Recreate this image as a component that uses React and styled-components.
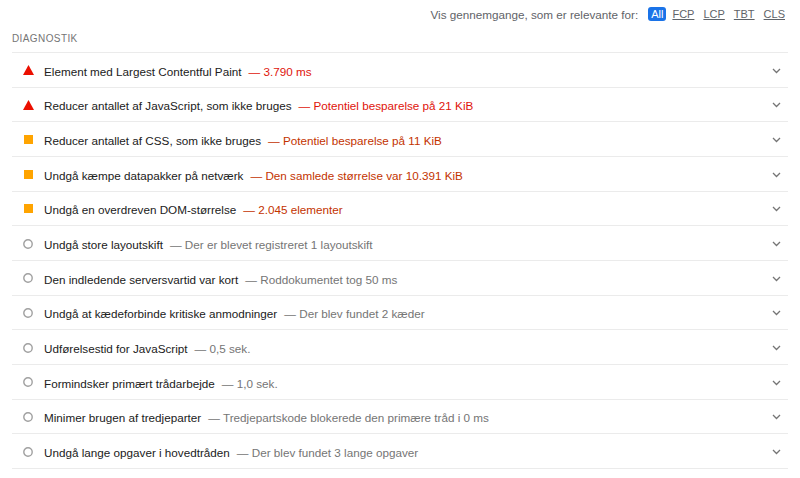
import React from "react";
import styled, { createGlobalStyle } from "styled-components";

const GlobalStyle = createGlobalStyle`
  html, body {
    margin: 0;
    padding: 0;
    background: #ffffff;
  }
  body {
    font-family: "Liberation Sans", Arial, sans-serif;
    color: #212121;
  }
`;

const Page = styled.div`
  width: 800px;
  padding: 0 12px;
  box-sizing: border-box;
`;

const FilterBar = styled.div`
  height: 28px;
  display: flex;
  align-items: center;
  justify-content: flex-end;
  padding-right: 3px;
  font-size: 11.7px;
  color: #5f6368;
`;

const FilterLabel = styled.span`
  margin-right: 10px;
`;

const FilterChip = styled.span`
  margin-left: ${(p) => (p.$first ? "0" : p.$afterActive ? "6px" : "9px")};
  padding: ${(p) => (p.$active ? "0 3px" : "0")};
  font-size: 11px;
  line-height: 14px;
  border-radius: 3px;
  background: ${(p) => (p.$active ? "#1a73e8" : "transparent")};
  color: ${(p) => (p.$active ? "#ffffff" : "#5f6368")};
  text-decoration: ${(p) => (p.$active ? "none" : "underline")};
`;

const SectionTitle = styled.div`
  height: 25px;
  display: flex;
  align-items: center;
  padding-bottom: 3px;
  box-sizing: border-box;
  font-size: 10px;
  letter-spacing: 0.4px;
  color: #757575;
  border-bottom: 1px solid #ebebeb;
`;

const List = styled.div`
  display: flex;
  flex-direction: column;
`;

const Row = styled.div`
  height: 34.67px;
  box-sizing: border-box;
  display: flex;
  align-items: center;
  padding-top: 3px;
  border-bottom: 1px solid #ebebeb;
  font-size: 11.7px;
`;

const IconBox = styled.span`
  width: 32px;
  display: flex;
  justify-content: center;
  align-items: center;
  flex-shrink: 0;
  margin-top: -2px;
`;

const Title = styled.span`
  color: #212121;
  white-space: nowrap;
`;

const colors = {
  fail: "#e0140a",
  average: "#c33300",
  info: "#757575",
};

const Display = styled.span`
  margin-left: 7px;
  color: ${(p) => colors[p.$status]};
  white-space: nowrap;
`;

const Chevron = styled.span`
  margin-left: auto;
  width: 20px;
  display: flex;
  justify-content: center;
  margin-right: 2px;
  margin-top: -1px;
`;

const StatusIcon = ({ status }) => {
  if (status === "fail")
    return (
      <svg width="11" height="10" viewBox="0 0 11 10">
        <polygon points="5.5,0 11,10 0,10" fill="#eb0f00" />
      </svg>
    );
  if (status === "average")
    return (
      <svg width="9" height="9" viewBox="0 0 9 9">
        <rect width="9" height="9" fill="#ffa400" />
      </svg>
    );
  return (
    <svg width="10" height="10" viewBox="0 0 10 10">
      <circle cx="5" cy="5" r="4.2" fill="none" stroke="#a0a0a0" strokeWidth="1.4" />
    </svg>
  );
};

const audits = [
  { status: "fail", title: "Element med Largest Contentful Paint", value: "3.790 ms" },
  { status: "fail", title: "Reducer antallet af JavaScript, som ikke bruges", value: "Potentiel besparelse på 21 KiB" },
  { status: "average", title: "Reducer antallet af CSS, som ikke bruges", value: "Potentiel besparelse på 11 KiB" },
  { status: "average", title: "Undgå kæmpe datapakker på netværk", value: "Den samlede størrelse var 10.391 KiB" },
  { status: "average", title: "Undgå en overdreven DOM-størrelse", value: "2.045 elementer" },
  { status: "info", title: "Undgå store layoutskift", value: "Der er blevet registreret 1 layoutskift" },
  { status: "info", title: "Den indledende serversvartid var kort", value: "Roddokumentet tog 50 ms" },
  { status: "info", title: "Undgå at kædeforbinde kritiske anmodninger", value: "Der blev fundet 2 kæder" },
  { status: "info", title: "Udførelsestid for JavaScript", value: "0,5 sek." },
  { status: "info", title: "Formindsker primært trådarbejde", value: "1,0 sek." },
  { status: "info", title: "Minimer brugen af tredjeparter", value: "Tredjepartskode blokerede den primære tråd i 0 ms" },
  { status: "info", title: "Undgå lange opgaver i hovedtråden", value: "Der blev fundet 3 lange opgaver" },
];

const filters = ["All", "FCP", "LCP", "TBT", "CLS"];

export default function App() {
  return (
    <Page>
      <GlobalStyle />
      <FilterBar>
        <FilterLabel>Vis gennemgange, som er relevante for:</FilterLabel>
        {filters.map((f, i) => (
          <FilterChip key={f} $first={i === 0} $active={i === 0} $afterActive={i === 1}>
            {f}
          </FilterChip>
        ))}
      </FilterBar>
      <SectionTitle>DIAGNOSTIK</SectionTitle>
      <List>
        {audits.map((a) => (
          <Row key={a.title}>
            <IconBox>
              <StatusIcon status={a.status} />
            </IconBox>
            <Title>{a.title}</Title>
            <Display $status={a.status}>— {a.value}</Display>
            <Chevron>
              <svg width="9" height="6" viewBox="0 0 9 6">
                <path d="M1 1 L4.5 4.5 L8 1" fill="none" stroke="#757575" strokeWidth="1.3" />
              </svg>
            </Chevron>
          </Row>
        ))}
      </List>
    </Page>
  );
}
